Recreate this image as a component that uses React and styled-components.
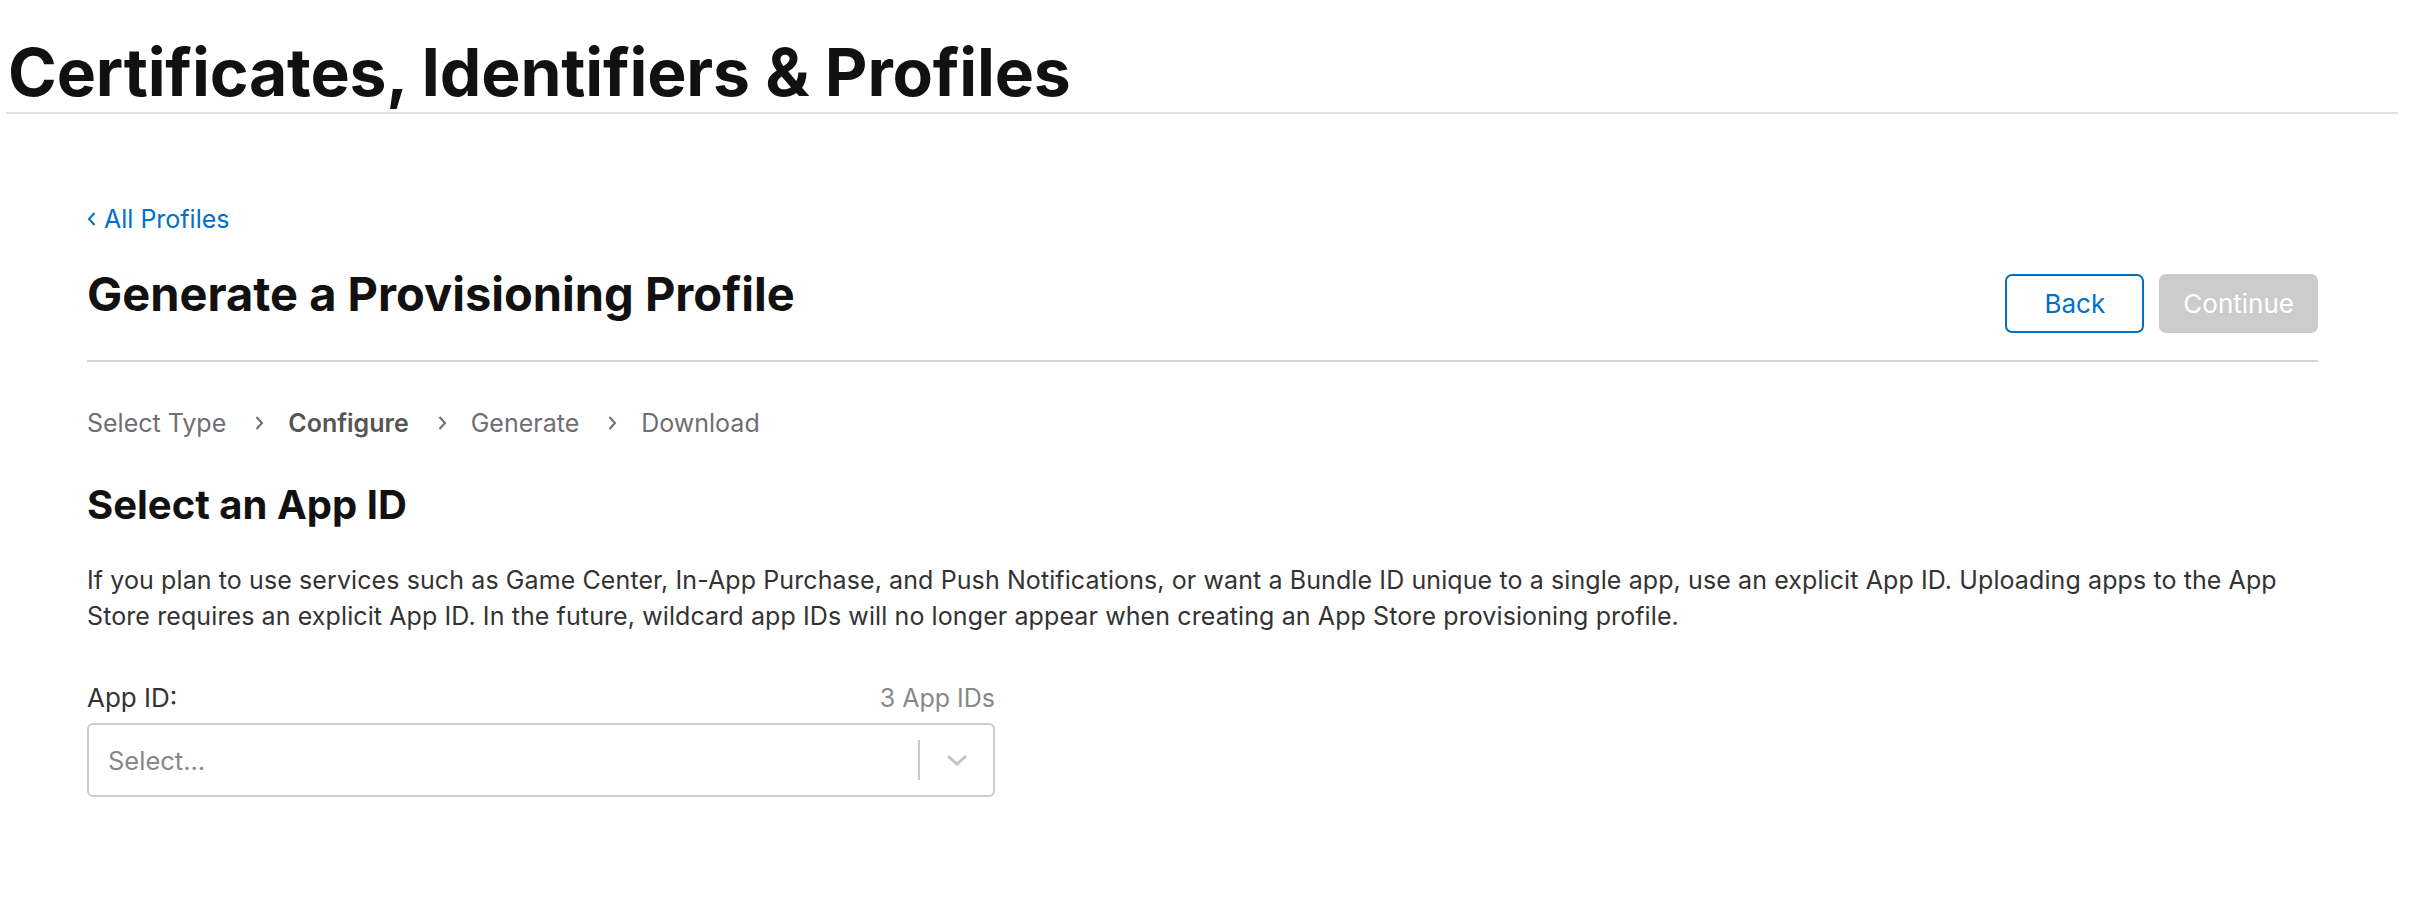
import styled, { createGlobalStyle } from "styled-components";

const GlobalStyle = createGlobalStyle`
  body {
    margin: 0;
    background: #fff;
    font-family: Inter, "Noto Sans", sans-serif;
    color: #1d1d1f;
  }
`;

const Header = styled.header`
  margin: 0 32px 0 6px;
  padding-top: 33px;
  border-bottom: 2px solid #e3e3e3;
`;

const PageTitle = styled.h1`
  margin: 0;
  padding-left: 2px;
  font-size: 66px;
  line-height: 79px;
  font-weight: 700;
  letter-spacing: -0.003em;
  color: #111;
`;

const Content = styled.main`
  margin: 0 112px 0 87px;
  padding-top: 87px;
`;

const BackLink = styled.a`
  display: inline-flex;
  align-items: center;
  gap: 8px;
  font-size: 25px;
  line-height: 36px;
  color: #0070c9;
  text-decoration: none;
  cursor: pointer;
`;

const HeadRow = styled.div`
  display: flex;
  justify-content: space-between;
  align-items: flex-start;
  margin-top: 30px;
  padding-bottom: 27px;
  border-bottom: 2px solid #d6d6d6;
`;

const Heading = styled.h2`
  margin: 0;
  font-size: 47px;
  line-height: 54px;
  font-weight: 700;
  color: #111;
`;

const Buttons = styled.div`
  display: flex;
  gap: 15px;
  margin-top: 7px;
`;

const Button = styled.button`
  height: 59px;
  padding: 0 ${(p) => (p.$primary ? "22px" : "20px")};
  min-width: ${(p) => (p.$primary ? "158px" : "139px")};
  border-radius: 7px;
  font-family: inherit;
  font-size: 26px;
  border: 2px solid ${(p) => (p.$primary ? "#cccccc" : "#0070c9")};
  background: ${(p) => (p.$primary ? "#cccccc" : "#fff")};
  color: ${(p) => (p.$primary ? "#fff" : "#0070c9")};
  cursor: ${(p) => (p.$primary ? "default" : "pointer")};
`;

const Steps = styled.ol`
  display: flex;
  align-items: center;
  list-style: none;
  margin: 44px 0 0;
  padding: 0;
  font-size: 25px;
  line-height: 34px;
  color: #6e6e73;
`;

const Step = styled.li`
  display: flex;
  align-items: center;
  font-weight: ${(p) => (p.$active ? 600 : 400)};
  color: ${(p) => (p.$active ? "#555" : "#6e6e73")};
`;

const Chevron = styled.svg`
  margin: 0 24px 0 29px;
  flex: none;
`;

const SubHeading = styled.h3`
  margin: 40px 0 0;
  font-size: 40px;
  line-height: 50px;
  font-weight: 700;
  color: #111;
`;

const Paragraph = styled.p`
  margin: 32px 0 0;
  font-size: 25px;
  line-height: 36px;
  letter-spacing: 0.004em;
  color: #333;
`;

const Field = styled.div`
  width: 908px;
  margin-top: 48px;
`;

const FieldHead = styled.div`
  display: flex;
  justify-content: space-between;
  align-items: baseline;
  margin-bottom: 9px;
`;

const Label = styled.label`
  font-size: 26px;
  line-height: 32px;
  color: #333;
`;

const Count = styled.span`
  font-size: 25px;
  color: #888;
`;

const SelectBox = styled.div`
  display: flex;
  align-items: center;
  height: 74px;
  box-sizing: border-box;
  border: 2px solid #cccccc;
  border-radius: 6px;
  background: #fff;
`;

const Placeholder = styled.span`
  flex: 1;
  padding-left: 19px;
  font-size: 25.5px;
  color: #888;
`;

const Separator = styled.span`
  width: 2px;
  height: 40px;
  background: #cccccc;
`;

const Indicator = styled.span`
  display: flex;
  align-items: center;
  justify-content: center;
  width: 73px;
`;

const steps = ["Select Type", "Configure", "Generate", "Download"];

export default function App() {
  return (
    <>
      <GlobalStyle />
      <Header>
        <PageTitle>Certificates, Identifiers &amp; Profiles</PageTitle>
      </Header>
      <Content>
        <BackLink>
          <svg width="9" height="16" viewBox="0 0 9 16">
            <path d="M7.5 2L2 8l5.5 6" fill="none" stroke="#0070c9" strokeWidth="2" />
          </svg>
          All Profiles
        </BackLink>
        <HeadRow>
          <Heading>Generate a Provisioning Profile</Heading>
          <Buttons>
            <Button>Back</Button>
            <Button $primary disabled>Continue</Button>
          </Buttons>
        </HeadRow>
        <Steps>
          {steps.map((s, i) => (
            <Step key={s} $active={s === "Configure"}>
              {i > 0 && (
                <Chevron width="9" height="16" viewBox="0 0 9 16">
                  <path d="M1.5 2L7 8l-5.5 6" fill="none" stroke="#6e6e73" strokeWidth="2" />
                </Chevron>
              )}
              {s}
            </Step>
          ))}
        </Steps>
        <SubHeading>Select an App ID</SubHeading>
        <Paragraph>
          If you plan to use services such as Game Center, In-App Purchase, and Push Notifications, or want a Bundle ID unique to a single app, use an explicit App ID. Uploading apps to the App Store requires an explicit App ID. In the future, wildcard app IDs will no longer appear when creating an App Store provisioning profile.
        </Paragraph>
        <Field>
          <FieldHead>
            <Label>App ID:</Label>
            <Count>3 App IDs</Count>
          </FieldHead>
          <SelectBox>
            <Placeholder>Select...</Placeholder>
            <Separator />
            <Indicator>
              <svg width="24" height="14" viewBox="0 0 24 14">
                <path d="M3 3l9 8 9-8" fill="none" stroke="#c4c4c4" strokeWidth="3" />
              </svg>
            </Indicator>
          </SelectBox>
        </Field>
      </Content>
    </>
  );
}
